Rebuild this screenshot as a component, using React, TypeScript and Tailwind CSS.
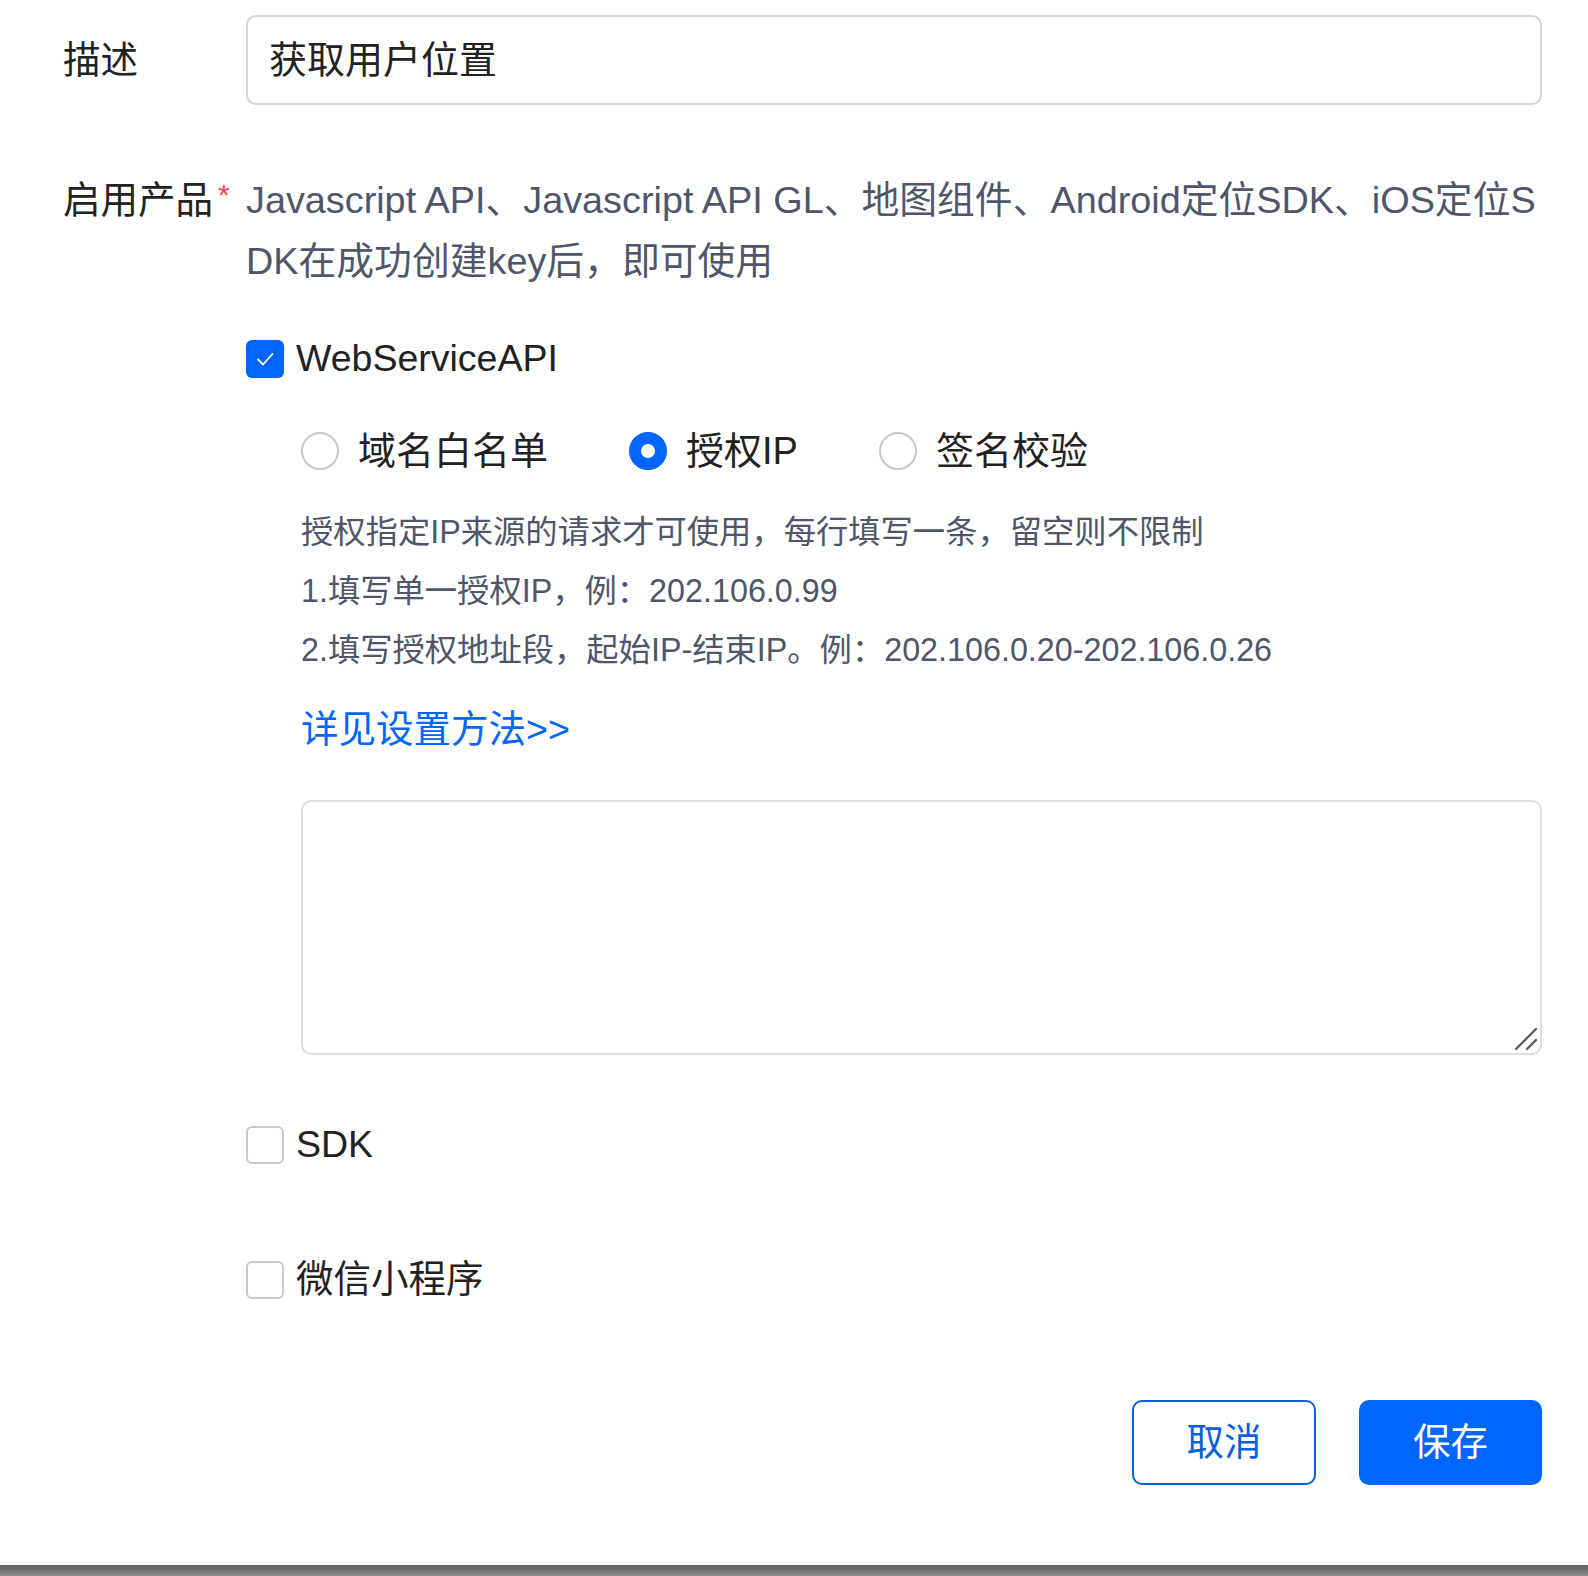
import React from "react";

const font = {
  fontFamily: '"Liberation Sans", "Noto Sans CJK SC", sans-serif',
};

function Checkbox({ checked, label }: { checked?: boolean; label: string }) {
  return (
    <label className="flex h-[40px] items-center gap-[12px]">
      {checked ? (
        <span className="flex h-[38px] w-[38px] items-center justify-center rounded-[6px] bg-[#0066ff]">
          <svg width="22" height="22" viewBox="0 0 22 22" fill="none">
            <path d="M4 11.5l5 5L18.5 6" stroke="#fff" strokeWidth="1.8" strokeLinecap="round" strokeLinejoin="round" />
          </svg>
        </span>
      ) : (
        <span className="h-[38px] w-[38px] rounded-[6px] border-2 border-[#c9c9c9] bg-white" />
      )}
      <span className="text-[37.5px] leading-none text-[#222]">{label}</span>
    </label>
  );
}

function Radio({ checked, label }: { checked?: boolean; label: string }) {
  return (
    <label className="flex items-center gap-[19px]">
      {checked ? (
        <span className="h-[38px] w-[38px] rounded-full border-[12px] border-[#0066ff] bg-white" />
      ) : (
        <span className="h-[38px] w-[38px] rounded-full border-2 border-[#c6c6c6] bg-white" />
      )}
      <span className="text-[38px] leading-[50px] text-[#222]">{label}</span>
    </label>
  );
}

export default function App() {
  return (
    <div className="flex min-h-[1576px] flex-col bg-white" style={font}>
      <div className="flex-1 pl-[63px] pr-[46px] pt-[15px]">
        {/* 描述 */}
        <div className="flex items-center">
          <div className="w-[183px] text-[37.5px] text-[#222]">描述</div>
          <div className="flex h-[90px] flex-1 items-center rounded-[10px] border-2 border-[#d4d4d4] px-[21px] text-[38px] text-[#222]">
            获取用户位置
          </div>
        </div>

        {/* 启用产品 */}
        <div className="mt-[65px] flex">
          <div className="relative w-[183px] text-[37.5px] leading-[61px] text-[#222]">
            启用产品
            <span className="absolute left-[155px] top-[-6px] text-[30px] text-[#f5484a]">*</span>
          </div>
          <div className="flex-1">
            <p className="break-all text-[37.8px] leading-[61px] text-[#4f566a]">
              Javascript API、Javascript API GL、地图组件、Android定位SDK、iOS定位SDK在成功创建key后，即可使用
            </p>

            <div className="mt-[47px]">
              <Checkbox checked label="WebServiceAPI" />
            </div>

            <div className="pl-[55px]">
              <div className="mt-[47px] flex items-center gap-[81px]">
                <Radio label="域名白名单" />
                <Radio checked label="授权IP" />
                <Radio label="签名校验" />
              </div>

              <div className="mt-[27px] text-[32.3px] leading-[59px] text-[#4f566a]">
                <p>授权指定IP来源的请求才可使用，每行填写一条，留空则不限制</p>
                <p>1.填写单一授权IP，例：202.106.0.99</p>
                <p>2.填写授权地址段，起始IP-结束IP。例：202.106.0.20-202.106.0.26</p>
              </div>

              <a className="mt-[24px] block text-[37.5px] leading-[50px] text-[#0066ff]">详见设置方法&gt;&gt;</a>

              <div className="relative mt-[46px]">
                <textarea
                  className="block h-[255px] w-full resize-none rounded-[10px] border-2 border-[#dcdde4] p-[16px] text-[32px] outline-none"
                  style={font}
                />
                <svg
                  className="pointer-events-none absolute bottom-[4px] right-[4px]"
                  width="24"
                  height="24"
                  viewBox="0 0 24 24"
                  fill="none"
                >
                  <path d="M2 22L22 2M13 22L22 13" stroke="#555" strokeWidth="2.2" strokeLinecap="round" />
                </svg>
              </div>
            </div>

            <div className="mt-[70px]">
              <Checkbox label="SDK" />
            </div>
            <div className="mt-[95px]">
              <Checkbox label="微信小程序" />
            </div>
          </div>
        </div>

        {/* 按钮 */}
        <div className="mt-[100px] flex justify-end gap-[43px]">
          <button className="flex h-[85px] w-[184px] items-center justify-center rounded-[10px] border-2 border-[#0a5fd8] bg-white text-[37.5px] text-[#0a5fd8]">
            取消
          </button>
          <button className="flex h-[85px] w-[183px] items-center justify-center rounded-[10px] bg-[#0066ff] text-[37.5px] text-white">
            保存
          </button>
        </div>
      </div>
      <div className="h-[11px] bg-gradient-to-b from-[#5e5e5e] to-[#8e8e8e]" />
    </div>
  );
}
